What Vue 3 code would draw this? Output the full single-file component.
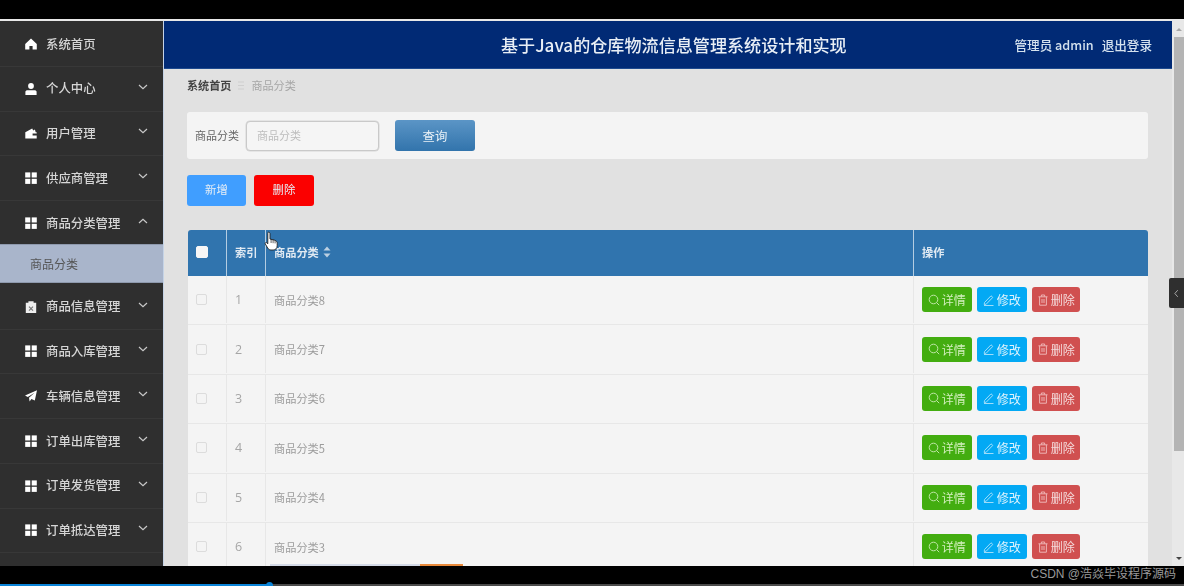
<script setup>
const menu = [
  { t: '系统首页', i: 'home' },
  { t: '个人中心', i: 'user', c: 'down' },
  { t: '用户管理', i: 'wallet', c: 'down' },
  { t: '供应商管理', i: 'grid', c: 'down' },
  { t: '商品分类管理', i: 'grid', c: 'up', sub: '商品分类' },
  { t: '商品信息管理', i: 'clip', c: 'down' },
  { t: '商品入库管理', i: 'grid', c: 'down' },
  { t: '车辆信息管理', i: 'plane', c: 'down' },
  { t: '订单出库管理', i: 'grid', c: 'down' },
  { t: '订单发货管理', i: 'grid', c: 'down' },
  { t: '订单抵达管理', i: 'grid', c: 'down' },
]
const rows = [8, 7, 6, 5, 4, 3].map((n, i) => ({ idx: i + 1, name: '商品分类' + n }))
</script>

<template>
  <div class="screen">
    <div class="black-top"></div>
    <div class="frame">
      <aside class="side">
        <template v-for="m in menu" :key="m.t">
          <div class="item">
            <svg class="ico" viewBox="0 0 12 12" fill="#fff">
              <path v-if="m.i === 'home'" d="M6 .6 11.8 6v5.6H7.6V8H4.4v3.6H.2V6z" />
              <g v-else-if="m.i === 'user'">
                <circle cx="6" cy="3" r="2.9" />
                <path d="M.4 12V8.8c0-1 1-1.6 2.2-1.6h6.8c1.2 0 2.2.6 2.2 1.6V12z" />
              </g>
              <path v-else-if="m.i === 'wallet'" d="M.3 5.2 7.2 1.4l1 2 1.7-.8.8 2.6h1V11.6H.3zM7.6 6.6h4.1v1.8H7.6z" fill-rule="evenodd" />
              <g v-else-if="m.i === 'grid'">
                <rect x=".2" y=".4" width="5.1" height="5.1" />
                <rect x="6.7" y=".4" width="5.1" height="5.1" />
                <rect x=".2" y="6.8" width="5.1" height="5.1" />
                <rect x="6.7" y="6.8" width="5.1" height="5.1" />
              </g>
              <g v-else-if="m.i === 'clip'">
                <path d="M.8 1.8h2.6V.2h5.2v1.6h2.6V12H.8z" fill="#eee" />
                <path d="m4 5.6 4 4M8 5.6l-4 4" stroke="#777" stroke-width="1.2" />
              </g>
              <path v-else d="M12 .2 9.8 10.6 6.4 9 4.6 11.6 4 7.8 9.6 2.8 2.8 7 0 5.6z" />
            </svg>
            <span class="label">{{ m.t }}</span>
            <svg v-if="m.c" class="chev" viewBox="0 0 10 6" fill="none" stroke="#c9c9c9" stroke-width="1.2">
              <path :d="m.c === 'down' ? 'M1 1l4 3.6L9 1' : 'M1 5l4-3.6L9 5'" />
            </svg>
          </div>
          <div v-if="m.sub" class="subitem">{{ m.sub }}</div>
        </template>
      </aside>
      <div class="right">
        <div class="content">
          <header class="top">
            <div class="title">基于Java的仓库物流信息管理系统设计和实现</div>
            <div class="user"><span>管理员 admin</span><span>退出登录</span></div>
          </header>
          <main class="main">
            <div class="crumb">
              <b>系统首页</b>
              <svg class="crumb-sep" viewBox="0 0 6 9" stroke="#cfcfcf" stroke-width="1"><path d="M0 1h6M0 4.5h6M0 8h6" /></svg>
              <span>商品分类</span>
            </div>
            <div class="search">
              <span class="slabel">商品分类</span>
              <div class="input">商品分类</div>
              <div class="qbtn">查询</div>
            </div>
            <div class="actions">
              <div class="act add">新增</div>
              <div class="act del">删除</div>
            </div>
            <div class="table">
              <div class="tr head">
                <div class="td c1"><span class="cb white"></span></div>
                <div class="td c2">索引</div>
                <div class="td c3">商品分类
                  <svg class="sort" viewBox="0 0 8 12" fill="#bcd0e2"><path d="M4 .5 7.5 4.6H.5zM4 11.5.5 7.4h7z" /></svg>
                </div>
                <div class="td c4">操作</div>
              </div>
              <div v-for="r in rows" :key="r.idx" class="tr">
                <div class="td c1"><span class="cb"></span></div>
                <div class="td c2 num">{{ r.idx }}</div>
                <div class="td c3">{{ r.name }}</div>
                <div class="td c4 ops">
                  <div class="op green">
                    <svg viewBox="0 0 12 12" fill="none" stroke="#bfe6a6" stroke-width="1"><circle cx="5.5" cy="5.5" r="4.3" /><path d="m8.6 8.6 2.6 2.6" /></svg>详情
                  </div>
                  <div class="op blue">
                    <svg viewBox="0 0 12 12" fill="none" stroke="#9fdcf9" stroke-width="1"><path d="M1.5 8.5 8 1.8l1.8 1.6-6.6 6.8-2 .3zM1 11.5h9.5" /></svg>修改
                  </div>
                  <div class="op red">
                    <svg viewBox="0 0 12 12" fill="none" stroke="#eeb4b4" stroke-width="1"><path d="M1.5 2.8h9M4.4 2.6V1h3.2v1.6M2.6 3v8.2h6.8V3M5 5v4M7 5v4" /></svg>删除
                  </div>
                </div>
              </div>
            </div>
          </main>
          <div class="strip"><span></span></div>
          <svg class="cursor" viewBox="0 0 14 20">
            <path d="M4 1.2c.9 0 1.5.6 1.5 1.5V8l4.6 1.2c1.6.5 2.6 1.4 2.6 3v2.6c0 2.4-1.6 4.2-4 4.2H6.4c-1.4 0-2.2-.6-3-1.7L.8 13c-.6-1 .6-2 1.5-1.2l1 1V2.7c0-.9-.2-1.5.7-1.5z" fill="#fff" stroke="#222" stroke-width=".9" />
            <path d="M6.6 8v4M8.6 8.6v3.6M10.6 9.4v3" stroke="#222" stroke-width=".7" />
          </svg>
        </div>
        <div class="scroll">
          <div class="arrow up"></div>
          <div class="thumb"></div>
          <div class="arrow dn"></div>
        </div>
        <div class="handle">
          <svg viewBox="0 0 6 10" fill="none" stroke="#bbb" stroke-width="1"><path d="M4.5 1 1 5l3.5 4" /></svg>
        </div>
      </div>
    </div>
    <div class="black-bottom">
      <div class="progress"><span class="knob"></span></div>
      <div class="mark">CSDN @浩焱毕设程序源码</div>
    </div>
  </div>
</template>

<style scoped>
.screen {
  width: 1184px;
  height: 586px;
  display: flex;
  flex-direction: column;
  overflow: hidden;
  background: #000;
  font-family: "Noto Sans CJK SC", "Open Sans", sans-serif;
  font-size: 12.4px;
}
.black-top {
  height: 19px;
  background: #000;
  border-bottom: 2px solid #e8e8e8;
  flex: none;
}
.frame {
  height: 545px;
  display: flex;
  flex: none;
  filter: blur(0.45px);
}
.side {
  width: 163px;
  flex: none;
  background: #2f2f2f;
  border-right: 1px solid #c5d3e6;
  overflow: hidden;
  padding-top: 1px;
  box-sizing: content-box;
}
.item {
  height: 44.75px;
  box-sizing: border-box;
  border-bottom: 1px solid #383838;
  display: flex;
  align-items: center;
  padding: 0 15px 0 25px;
  color: #d6d6d6;
}
.ico {
  width: 12px;
  height: 12px;
  flex: none;
  margin-right: 9px;
}
.label {
  flex: 1;
  line-height: 1;
  font-weight: 500;
}
.chev {
  width: 10px;
  height: 6px;
  margin-bottom: 4px;
  flex: none;
}
.subitem {
  height: 39px;
  box-sizing: border-box;
  margin: -2px 0 2px;
  background: #a9b5cb;
  border-top: 1px solid #8e99ad;
  border-bottom: 1px solid #8e99ad;
  padding-left: 30px;
  display: flex;
  align-items: center;
  color: #555;
  font-size: 12px;
}
.right {
  flex: 1;
  display: flex;
  position: relative;
  min-width: 0;
}
.content {
  flex: 1;
  min-width: 0;
  position: relative;
  display: flex;
  flex-direction: column;
  background: #e1e1e1;
  overflow: hidden;
}
.top {
  height: 48px;
  flex: none;
  box-sizing: border-box;
  background: #012a75;
  border-bottom: 1px solid #1e4a8e;
  display: flex;
  align-items: center;
  color: #d5e2ee;
  position: relative;
}
.title {
  position: absolute;
  left: 337px;
  font-size: 17.1px;
  font-weight: 500;
  color: #e8eef5;
}
.user {
  margin-left: auto;
  margin-right: 20px;
  display: flex;
  gap: 8px;
  font-size: 12.6px;
  font-weight: 500;
}
.main {
  flex: 1;
  min-height: 0;
  padding: 0 24px 0 23px;
}
.crumb {
  height: 32px;
  display: flex;
  align-items: center;
  gap: 7px;
  color: #a6a6a6;
  font-size: 11.1px;
}
.crumb b {
  color: #444;
  font-weight: 700;
}
.crumb-sep {
  width: 6px;
  height: 9px;
}
.search {
  margin-top: 11px;
  height: 47px;
  border-radius: 3px;
  background: #f4f4f4;
  display: flex;
  align-items: center;
  padding-left: 8px;
  color: #666;
}
.slabel {
  width: 51px;
  flex: none;
  font-size: 11px;
  padding-bottom: 1px;
}
.input {
  width: 133px;
  height: 30px;
  box-sizing: border-box;
  border: 1px solid #c9c9c9;
  box-shadow: 0 0 0 0.5px #d5d5d5;
  border-radius: 4px;
  background: #f5f5f5;
  color: #bdbdbd;
  padding: 0 0 1px 10px;
  display: flex;
  align-items: center;
  font-size: 11px;
}
.qbtn {
  margin-left: 16px;
  width: 80px;
  height: 31px;
  border-radius: 3px;
  background: linear-gradient(#5b95c6, #3274ac);
  color: #e8f0f6;
  display: flex;
  align-items: center;
  justify-content: center;
  font-size: 12.4px;
}
.actions {
  margin-top: 16px;
  display: flex;
  gap: 8px;
}
.act {
  height: 31px;
  width: 59px;
  box-sizing: border-box;
  padding-bottom: 3px;
  border-radius: 3px;
  display: flex;
  align-items: center;
  justify-content: center;
  color: #e6eef5;
  font-size: 11.4px;
}
.add { background: #409eff; }
.del { background: #fb0000; width: 60px; }
.table {
  margin: 24px 0 0 1px;
  border-radius: 3px 3px 0 0;
  overflow: hidden;
}
.tr {
  display: flex;
  height: 49.4px;
  padding-bottom: 1px;
  background: #f4f4f4;
  border-bottom: 1px solid #e7e7e7;
  box-sizing: border-box;
  color: #9c9c9c;
  font-size: 11.2px;
}
.tr.head {
  height: 46px;
  padding-bottom: 0;
  background: #3074ae;
  border-bottom: 0;
  color: #dfe9f2;
  font-weight: 700;
}
.tr.head .td {
  padding-bottom: 2px;
}
.td {
  display: flex;
  align-items: center;
  padding-left: 8px;
  box-sizing: border-box;
  border-right: 1px solid #e7e7e7;
}
.head .td { border-right-color: #b4cde2; }
.c1 { width: 39px; flex: none; }
.c2 { width: 39px; flex: none; }
.c3 { width: 648px; flex: none; gap: 4px; }
.c4 { flex: 1; border-right: 0; }
.num {
  font-size: 12.5px;
  color: #a6a6a6;
  font-family: "Open Sans", sans-serif;
}
.cb {
  width: 11px;
  height: 11px;
  box-sizing: border-box;
  border: 1px solid #dcdcdc;
  border-radius: 2px;
  background: #f4f4f4;
}
.cb.white {
  width: 12px;
  height: 12px;
  background: #f6f6f6;
  border-color: #f6f6f6;
}
.sort {
  width: 8px;
  height: 12px;
}
.ops {
  gap: 5px;
}
.op {
  width: 50px;
  height: 25px;
  border-radius: 3px;
  display: flex;
  align-items: center;
  justify-content: center;
  gap: 1.5px;
  font-size: 12px;
}
.op svg {
  width: 12px;
  height: 12px;
  flex: none;
}
.green { background: #43ad10; color: #d3efbe; }
.blue { background: #03a9f4; color: #dff3fd; }
.red { background: #d05050; width: 48px; color: #f4dcdc; }
.strip {
  position: absolute;
  left: 106px;
  bottom: 0;
  width: 193px;
  height: 2px;
  background: #d3d9e6;
}
.strip span {
  position: absolute;
  right: 0;
  top: 0;
  width: 43px;
  height: 2px;
  background: #e8893a;
}
.cursor {
  position: absolute;
  left: 100px;
  top: 210px;
  width: 15px;
  height: 20px;
}
.scroll {
  width: 12px;
  flex: none;
  background: #e8e8e8;
  position: relative;
}
.thumb {
  position: absolute;
  left: 1.5px;
  right: 0;
  top: 16px;
  height: 414px;
  background: #b4b4b4;
}
.arrow {
  position: absolute;
  left: 4px;
  width: 0;
  height: 0;
  border-left: 3px solid transparent;
  border-right: 3px solid transparent;
}
.arrow.up {
  top: 7px;
  border-bottom: 3px solid #a8a8a8;
}
.arrow.dn {
  bottom: 6px;
  border-top: 3px solid #444;
}
.handle {
  position: absolute;
  right: 0;
  top: 257px;
  width: 15px;
  height: 30px;
  background: #2f2f2f;
  display: flex;
  align-items: center;
  justify-content: center;
  border-radius: 2px 0 0 2px;
}
.handle svg {
  width: 5px;
  height: 9px;
}
.black-bottom {
  flex: 1;
  background: #000;
  position: relative;
}
.progress {
  position: absolute;
  left: 0;
  right: 0;
  bottom: 0;
  height: 2px;
  background: linear-gradient(to right, #0a84d8 270px, #4a4a4a 270px);
}
.knob {
  position: absolute;
  left: 266px;
  top: -2px;
  width: 7px;
  height: 7px;
  border-radius: 50%;
  background: #0a84d8;
}
.mark {
  position: absolute;
  right: 8px;
  top: 0;
  line-height: 17px;
  color: #9a9a9a;
  font-size: 12px;
  font-family: "Liberation Sans", "Noto Sans CJK SC", sans-serif;
}
</style>
